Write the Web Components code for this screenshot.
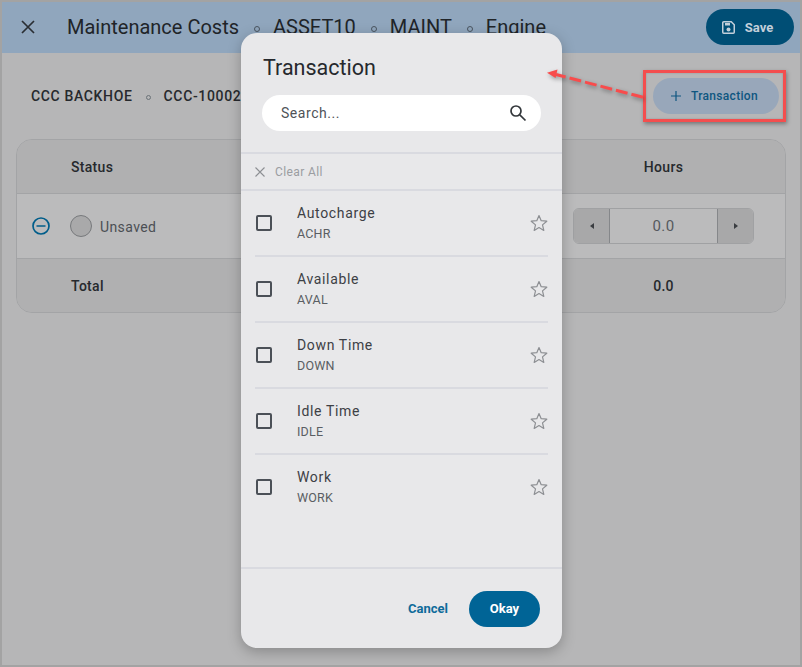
<!DOCTYPE html>
<html>
<head>
<meta charset="utf-8">
<style>
  html, body { margin: 0; height: 100%; overflow: hidden; }
  body { font-family: Roboto, "Liberation Sans", sans-serif; background: #a3a3a3; }
</style>
</head>
<body>
<maint-page>
  <maint-header></maint-header>
  <asset-bar></asset-bar>
  <cost-table></cost-table>
  <txn-dialog>
    <txn-item name="Autocharge" code="ACHR"></txn-item>
    <txn-item name="Available" code="AVAL"></txn-item>
    <txn-item name="Down Time" code="DOWN"></txn-item>
    <txn-item name="Idle Time" code="IDLE"></txn-item>
    <txn-item name="Work" code="WORK"></txn-item>
  </txn-dialog>
  <call-out></call-out>
</maint-page>
<script>
// page shell
class MaintPage extends HTMLElement {
  constructor() {
    super();
    this.attachShadow({ mode: 'open' });
    this.shadowRoot.innerHTML = `
      <style>
        :host {
          display: flex;
          flex-direction: column;
          position: relative;
          box-sizing: border-box;
          width: 802px;
          height: 667px;
          border: 2px solid #a3a3a3;
          background: #b6b6b7;
          overflow: hidden;
        }
      </style>
      <slot></slot>
    `;
  }
}

class MaintHeader extends HTMLElement {
  constructor() {
    super();
    this.attachShadow({ mode: 'open' });
    this.shadowRoot.innerHTML = `
      <style>
        :host {
          display: flex;
          align-items: center;
          height: 50px;
          flex: none;
          padding-bottom: 1px;
          background: #90a6bd;
          color: #202428;
          font-size: 20px;
        }
        .close { width: 16px; height: 16px; margin: 0 0 0 18px; }
        .crumbs { display: flex; align-items: center; margin-left: 31px; white-space: nowrap; }
        .dot {
          width: 4px; height: 4px; margin: 3px 13px 0 15px;
          border: 1px solid #4a5560; border-radius: 50%;
        }
        .save {
          display: flex; align-items: center; justify-content: center; gap: 10px;
          position: absolute; right: 6px; top: 7px;
          box-sizing: border-box;
          width: 88px; height: 36px;
          padding-right: 5px;
          background: #004e75; color: #c3cfda;
          border-radius: 18px;
          font-size: 13px; font-weight: 700;
        }
      </style>
      <svg class="close" viewBox="0 0 16 16" fill="none" stroke="#2a2e33" stroke-width="1.7">
        <path d="M2 2l12 12M14 2L2 14"/>
      </svg>
      <div class="crumbs">
        <span>Maintenance Costs</span><i class="dot"></i>
        <span>ASSET10</span><i class="dot"></i>
        <span>MAINT</span><i class="dot"></i>
        <span>Engine</span>
      </div>
      <div class="save">
        <svg width="13" height="13" viewBox="0 0 13 13" fill="none" stroke="#c3cfda">
          <path stroke-width="1.500" d="M1.750.750h7.500l3 3v7.500a1 1 0 0 1-1 1h-9.500a1 1 0 0 1-1-1v-9.500a1 1 0 0 1 1-1z"/>
          <path stroke="none" fill="#c3cfda" d="M3 2h5v2.500H3z"/>
          <circle stroke="none" fill="#c3cfda" cx="6.500" cy="8.500" r="2"/>
        </svg>
        <span>Save</span>
      </div>
    `;
  }
}

class AssetBar extends HTMLElement {
  constructor() {
    super();
    this.attachShadow({ mode: 'open' });
    this.shadowRoot.innerHTML = `
      <style>
        :host {
          display: flex;
          align-items: center;
          flex: none;
          height: 86px;
          padding-left: 29px;
          color: #26292d;
          font-size: 14px;
          font-weight: 500;
          letter-spacing: .65px;
          white-space: nowrap;
        }
        .dot {
          width: 3px; height: 3px; margin: 2px 13px 0 13px;
          border: 1px solid #6b7278; border-radius: 50%;
        }
      </style>
      <span>CCC BACKHOE</span><i class="dot"></i><span>CCC-10002</span>
    `;
  }
}

class CostTable extends HTMLElement {
  constructor() {
    super();
    this.attachShadow({ mode: 'open' });
    this.shadowRoot.innerHTML = `
      <style>
        :host {
          display: grid;
          grid-template-columns: 54px 1fr 181px 31px;
          grid-template-rows: 53px 66px 53px;
          flex: none;
          box-sizing: border-box;
          width: 770px;
          height: 174px;
          margin-left: 14px;
          border: 1px solid #a3a4a6;
          border-radius: 16px;
          color: #26292d;
          font-size: 14px;
          overflow: hidden;
        }
        .cell { display: flex; align-items: center; }
        .head, .foot { background: #b0b0b1; font-weight: 500; letter-spacing: .3px; }
        .mid { background: #bbbbbc; border-top: 1px solid #a3a4a6; border-bottom: 1px solid #a3a4a6; }
        .num { justify-content: center; }
        .minus { padding-left: 15px; }
        .light { background: #a8a8a9; width: 35px; display: flex; align-items: center; justify-content: center; }
        .status { gap: 8px; color: #4b4f54; letter-spacing: .4px; }
        .status span { padding-top: 1px; }
        .ball { box-sizing: border-box; width: 22px; height: 22px; margin-left: -1px; border-radius: 50%; background: #a9a9aa; border: 1px solid #77797c; }
        .step {
          display: flex;
          box-sizing: border-box;
          width: 181px; height: 36px;
          border: 1px solid #a0a1a3;
          border-radius: 6px;
          overflow: hidden;
          color: #55595e;
          letter-spacing: .4px;
        }
        .val { flex: 1; display: flex; align-items: center; justify-content: center; border-left: 1px solid #85878a; border-right: 1px solid #85878a; font-size: 15px; }
      </style>
      <div class="cell head"></div>
      <div class="cell head">Status</div>
      <div class="cell head num">Hours</div>
      <div class="cell head"></div>

      <div class="cell mid minus">
        <svg width="18" height="18" viewBox="0 0 18 18" fill="none" stroke="#005d8a" stroke-width="1.700">
          <circle cx="9" cy="9" r="8"/><path d="M4.500 9h9"/>
        </svg>
      </div>
      <div class="cell mid status"><i class="ball"></i><span>Unsaved</span></div>
      <div class="cell mid num">
        <div class="step">
          <div class="light"><svg width="4" height="6"><path d="M4 0v6L0 3z" fill="#3a3d41"/></svg></div>
          <div class="val">0.0</div>
          <div class="light"><svg width="4" height="6"><path d="M0 0v6l4-3z" fill="#3a3d41"/></svg></div>
        </div>
      </div>
      <div class="cell mid"></div>

      <div class="cell foot"></div>
      <div class="cell foot">Total</div>
      <div class="cell foot num">0.0</div>
      <div class="cell foot"></div>
    `;
  }
}

class TxnItem extends HTMLElement {
  constructor() {
    super();
    this.attachShadow({ mode: 'open' });
    this.shadowRoot.innerHTML = `
      <style>
        :host {
          display: flex;
          align-items: center;
          box-sizing: border-box;
          height: 66px;
          margin: 0 14px;
          border-bottom: 2px solid #d9dae0;
          color: #3d4045;
        }
        :host(:last-child) { border-bottom-color: transparent; }
        .box {
          box-sizing: border-box;
          width: 16px; height: 16px; margin-left: 1px;
          border: 2px solid #4b5057; border-radius: 2px;
        }
        .text { flex: 1; margin-left: 25px; }
        .name { font-size: 14px; line-height: 20px; letter-spacing: .65px; }
        .code { font-size: 12.500px; line-height: 21px; color: #5a5e63; letter-spacing: .2px; }
      </style>
      <i class="box"></i>
      <div class="text">
        <div class="name"></div>
        <div class="code"></div>
      </div>
      <svg width="18" height="18" viewBox="0 0 18 18" fill="none" stroke="#8d8f93" stroke-width="1.200" stroke-linejoin="round">
        <path d="M9 1.500l2.200 5.200 5.600.5-4.300 3.700 1.300 5.500L9 13.500l-4.800 2.900 1.300-5.500L1.200 7.200l5.600-.5z"/>
      </svg>
    `;
    this.shadowRoot.querySelector('.name').textContent = this.getAttribute('name');
    this.shadowRoot.querySelector('.code').textContent = this.getAttribute('code');
  }
}

class TxnDialog extends HTMLElement {
  constructor() {
    super();
    this.attachShadow({ mode: 'open' });
    this.shadowRoot.innerHTML = `
      <style>
        :host {
          display: flex;
          flex-direction: column;
          position: absolute;
          left: 239px;
          top: 31px;
          box-sizing: border-box;
          width: 321px;
          height: 615px;
          background: #e8e8ea;
          border-radius: 16px;
          box-shadow: 0 4px 14px rgba(0,0,0,.25);
        }
        h2 {
          margin: 0;
          padding: 21px 0 0 22px;
          height: 41px;
          font-size: 21.500px;
          line-height: 27px;
          font-weight: 400;
          color: #26292d;
        }
        .search {
          display: flex;
          align-items: center;
          justify-content: space-between;
          box-sizing: border-box;
          width: 279px;
          height: 36px;
          margin: 0 0 0 21px;
          padding: 0 14px 0 19px;
          background: #fff;
          border-radius: 18px;
          font-size: 14px;
          letter-spacing: .55px;
          color: #4f5358;
        }
        .clear {
          display: flex;
          align-items: center;
          gap: 10px;
          box-sizing: border-box;
          height: 39px;
          margin-top: 21px;
          padding-left: 14px;
          border-top: 2px solid #d9dae0;
          border-bottom: 2px solid #d9dae0;
          font-size: 12px;
          letter-spacing: .4px;
          color: #9b9da1;
        }
        .list { flex: 1; min-height: 0; }
        .foot {
          display: flex;
          align-items: center;
          justify-content: flex-end;
          box-sizing: border-box;
          height: 81px;
          padding: 0 22px 0 0;
          border-top: 2px solid #d9dae0;
          font-size: 13px;
          font-weight: 700;
        }
        .cancel { color: #0e6b9a; margin-right: 21px; }
        .okay {
          display: flex; align-items: center; justify-content: center;
          width: 71px; height: 36px;
          background: #006496;
          color: #fff;
          border-radius: 18px;
        }
      </style>
      <h2>Transaction</h2>
      <div class="search">
        <span>Search...</span>
        <svg width="18" height="18" viewBox="0 0 18 18" fill="none" stroke="#33373b" stroke-width="1.700">
          <circle cx="7" cy="7" r="5"/><path d="M10.800 10.800L16.500 16.500"/>
        </svg>
      </div>
      <div class="clear">
        <svg width="10" height="10" viewBox="0 0 10 10" fill="none" stroke="#8d8f93" stroke-width="1.100">
          <path d="M.5.500l9 9M9.500.500l-9 9"/>
        </svg>
        <span>Clear All</span>
      </div>
      <div class="list"><slot></slot></div>
      <div class="foot">
        <span class="cancel">Cancel</span>
        <span class="okay">Okay</span>
      </div>
    `;
  }
}

// the red markup drawn on top of the screenshot
class CallOut extends HTMLElement {
  constructor() {
    super();
    this.attachShadow({ mode: 'open' });
    this.shadowRoot.innerHTML = `
      <style>
        :host { display: block; position: absolute; left: 0; top: 0; width: 800px; height: 665px; pointer-events: none; }
        .btn {
          position: absolute; left: 651px; top: 76px;
          display: flex; align-items: center; justify-content: center; gap: 10px;
          box-sizing: border-box;
          width: 126px; height: 36px;
          padding-right: 3px;
          background: #98a7ba; color: #0e5680;
          border-radius: 18px;
          font-size: 12px; font-weight: 500; letter-spacing: .3px;
        }
        .mark {
          position: absolute; left: 641px; top: 68px;
          box-sizing: border-box;
          width: 143px; height: 52px;
          border: 3px solid #f44e4e;
          box-shadow: 1px 2px 4px rgba(0,0,0,.35), inset 0 0 2px rgba(0,0,0,.2);
        }
        svg.arrow { position: absolute; left: 0; top: 0; overflow: visible; filter: drop-shadow(1px 2px 2px rgba(0,0,0,.35)); }
      </style>
      <div class="btn">
        <svg width="10" height="10" viewBox="0 0 10 10" stroke="#0e5680" stroke-width="1.200"><path d="M5 0v10M0 5h10"/></svg>
        <span>Transaction</span>
      </div>
      <div class="mark"></div>
      <svg class="arrow" width="800" height="665">
        <path d="M641 95.300L554 72.500" stroke="#f84c4c" stroke-width="3" stroke-dasharray="12 4" fill="none"/>
        <path d="M545 70.700l10.500-3.300-1.900 8.600z" fill="#f84c4c"/>
      </svg>
    `;
  }
}

customElements.define('maint-page', MaintPage);
customElements.define('maint-header', MaintHeader);
customElements.define('asset-bar', AssetBar);
customElements.define('cost-table', CostTable);
customElements.define('txn-item', TxnItem);
customElements.define('txn-dialog', TxnDialog);
customElements.define('call-out', CallOut);
</script>
</body>
</html>
